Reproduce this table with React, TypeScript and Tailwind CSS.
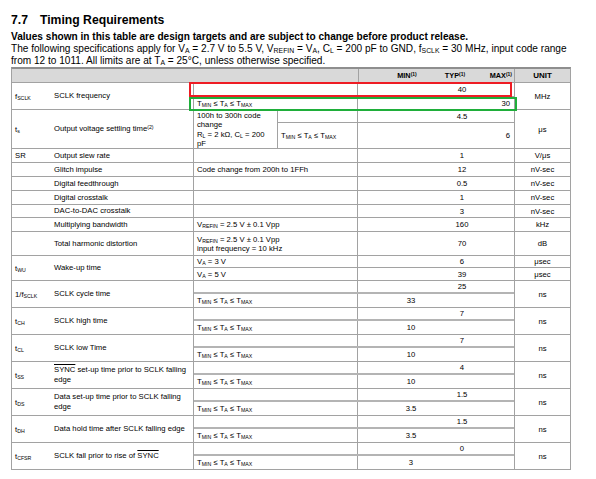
import React from "react";

type N = { children?: React.ReactNode };

function S({ children }: N) {
  return <sub className="bottom-[-0.2em] text-[0.68em]">{children}</sub>;
}
function Sup({ children }: N) {
  return <sup className="top-[-0.45em] text-[0.68em]">{children}</sup>;
}

function TT() {
  return (
    <span>
      T<S>MIN</S> ≤ T<S>A</S> ≤ T<S>MAX</S>
    </span>
  );
}

function Vals({ min, typ, max }: { min?: string; typ?: string; max?: string }) {
  return (
    <div className="grid h-full w-[156px] grid-cols-[27px_52px_50px_27px] items-center">
      <span />
      <span className="text-center">{min}</span>
      <span className="text-center">{typ}</span>
      <span className="pr-[4px] text-right">{max}</span>
    </div>
  );
}

function Cond({ children, w = "w-[164px]" }: N & { w?: string }) {
  return (
    <div className={`flex h-full items-center border-r border-[#a2a2a2] pl-[3px] ${w}`}>{children}</div>
  );
}

function Sym({ children }: N) {
  return <div className="flex w-[39px] shrink-0 items-center pl-[3px]">{children}</div>;
}
function Param({ children }: N) {
  return (
    <div className="flex w-[142px] shrink-0 items-center pl-[3px] leading-[10px]">
      <span>{children}</span>
    </div>
  );
}

function Single({
  sym,
  param,
  cond,
  typ,
  unit,
  h,
}: {
  sym?: React.ReactNode;
  param: React.ReactNode;
  cond?: React.ReactNode;
  typ: string;
  unit: string;
  h: string;
}) {
  return (
    <div className={`flex border-b border-[#a2a2a2] ${h}`}>
      <Sym>{sym}</Sym>
      <Param>{param}</Param>
      <div className="flex border-l border-[#a2a2a2]">
        <Cond>{cond}</Cond>
        <Vals typ={typ} />
      </div>
      <div className="flex flex-1 items-center justify-center border-l border-[#a2a2a2]">{unit}</div>
    </div>
  );
}

function Double({
  sym,
  param,
  typ,
  min,
}: {
  sym: React.ReactNode;
  param: React.ReactNode;
  typ: string;
  min: string;
}) {
  return (
    <div className="flex h-[27px] border-b border-[#a2a2a2]">
      <Sym>{sym}</Sym>
      <Param>{param}</Param>
      <div className="flex flex-col border-l border-[#a2a2a2]">
        <div className="flex h-[13px] border-b-2 border-[#b4b4b4]">
          <Cond />
          <Vals typ={typ} />
        </div>
        <div className="flex flex-1">
          <Cond>
            <TT />
          </Cond>
          <Vals min={min} />
        </div>
      </div>
      <div className="flex flex-1 items-center justify-center border-l border-[#a2a2a2]">ns</div>
    </div>
  );
}

export default function App() {
  return (
    <div className="min-h-[479px] w-[596px] bg-white font-['Liberation_Sans',Arial,Helvetica,sans-serif] text-black">
      <div className="pl-[11px] pt-[12px]">
        <div className="flex h-[16px] items-center text-[12.2px] font-bold leading-[16px]">
          <span className="w-[29px]">7.7</span>
          <span>Timing Requirements</span>
        </div>
        <div className="mt-[2.5px] text-[10.1px] leading-[12px]">
          <div className="font-bold">
            Values shown in this table are design targets and are subject to change before product release.
          </div>
          <div>
            The following specifications apply for V<S>A</S> = 2.7 V to 5.5 V, V<S>REFIN</S> = V<S>A</S>, C
            <S>L</S> = 200 pF to GND, f<S>SCLK</S> = 30 MHz, input code range
          </div>
          <div>
            from 12 to 1011. All limits are at T<S>A</S> = 25°C, unless otherwise specified.
          </div>
        </div>

        <div className="relative mt-[0.5px] w-[560px] border-x border-t-2 border-[#a2a2a2] border-t-[#8e8e8e] text-[7.7px] leading-[9px]">
          {/* header */}
          <div className="flex h-[14px] border-b border-[#a2a2a2] bg-[#d9d9d9] font-bold">
            <div className="w-[346px]" />
            <div className="grid h-full w-[156px] grid-cols-[27px_52px_50px_27px] items-center border-l border-[#a2a2a2] text-[7.3px]">
              <span />
              <span className="pr-[10px] text-center">
                MIN<Sup>(1)</Sup>
              </span>
              <span className="pr-[16px] text-center">
                TYP<Sup>(1)</Sup>
              </span>
              <span className="whitespace-nowrap pr-[3px] text-right">
                MAX<Sup>(1)</Sup>
              </span>
            </div>
            <div className="flex flex-1 items-center justify-center border-l border-[#a2a2a2] text-[8px]">UNIT</div>
          </div>

          {/* fSCLK */}
          <div className="flex h-[27px] border-b border-[#a2a2a2]">
            <Sym>
              <span>
                f<S>SCLK</S>
              </span>
            </Sym>
            <Param>SCLK frequency</Param>
            <div className="flex flex-col border-l border-[#a2a2a2]">
              <div className="flex h-[14px] border-b border-[#a2a2a2]">
                <Cond />
                <Vals typ="40" />
              </div>
              <div className="flex flex-1">
                <Cond>
                  <TT />
                </Cond>
                <Vals max="30" />
              </div>
            </div>
            <div className="flex flex-1 items-center justify-center border-l border-[#a2a2a2]">MHz</div>
          </div>

          {/* ts */}
          <div className="flex h-[39px] border-b border-[#a2a2a2]">
            <Sym>
              <span>
                t<S>s</S>
              </span>
            </Sym>
            <Param>
              Output voltage settling time<Sup>(2)</Sup>
            </Param>
            <div className="flex border-l border-[#a2a2a2]">
              <div className="w-[84px] border-r border-[#a2a2a2] pl-[3px] pt-[1px] leading-[9.3px]">
                100h to 300h code
                <br />
                change
                <br />R<S>L</S> = 2 kΩ, C<S>L</S> = 200
                <br />
                pF
              </div>
              <div className="flex flex-col">
                <div className="flex h-[13px] border-b border-[#a2a2a2]">
                  <Cond w="w-[80px]" />
                  <Vals typ="4.5" />
                </div>
                <div className="flex flex-1">
                  <Cond w="w-[80px]">
                    <TT />
                  </Cond>
                  <Vals max="6" />
                </div>
              </div>
            </div>
            <div className="flex flex-1 items-center justify-center border-l border-[#a2a2a2]">μs</div>
          </div>

          <Single h="h-[14px]" sym="SR" param="Output slew rate" typ="1" unit="V/μs" />
          <Single h="h-[14px]" param="Glitch impulse" cond="Code change from 200h to 1FFh" typ="12" unit="nV-sec" />
          <Single h="h-[14px]" param="Digital feedthrough" typ="0.5" unit="nV-sec" />
          <Single h="h-[14px]" param="Digital crosstalk" typ="1" unit="nV-sec" />
          <Single h="h-[13px]" param="DAC-to-DAC crosstalk" typ="3" unit="nV-sec" />
          <Single
            h="h-[14px]"
            param="Multiplying bandwidth"
            cond={
              <span>
                V<S>REFIN</S> = 2.5 V ± 0.1 Vpp
              </span>
            }
            typ="160"
            unit="kHz"
          />
          <Single
            h="h-[24px]"
            param="Total harmonic distortion"
            cond={
              <span className="leading-[9px]">
                V<S>REFIN</S> = 2.5 V ± 0.1 Vpp
                <br />
                input frequency = 10 kHz
              </span>
            }
            typ="70"
            unit="dB"
          />

          {/* tWU */}
          <div className="flex h-[25px] border-b border-[#a2a2a2]">
            <Sym>
              <span>
                t<S>WU</S>
              </span>
            </Sym>
            <Param>Wake-up time</Param>
            <div className="flex flex-1 flex-col border-l border-[#a2a2a2]">
              <div className="flex h-[12px] border-b border-[#a2a2a2]">
                <Cond>
                  <span>
                    V<S>A</S> = 3 V
                  </span>
                </Cond>
                <Vals typ="6" />
                <div className="flex flex-1 items-center justify-center border-l border-[#a2a2a2]">μsec</div>
              </div>
              <div className="flex flex-1">
                <Cond>
                  <span>
                    V<S>A</S> = 5 V
                  </span>
                </Cond>
                <Vals typ="39" />
                <div className="flex flex-1 items-center justify-center border-l border-[#a2a2a2]">μsec</div>
              </div>
            </div>
          </div>

          <Double
            sym={
              <span>
                1/f<S>SCLK</S>
              </span>
            }
            param="SCLK cycle time"
            typ="25"
            min="33"
          />
          <Double
            sym={
              <span>
                t<S>CH</S>
              </span>
            }
            param="SCLK high time"
            typ="7"
            min="10"
          />
          <Double
            sym={
              <span>
                t<S>CL</S>
              </span>
            }
            param="SCLK low Time"
            typ="7"
            min="10"
          />
          <Double
            sym={
              <span>
                t<S>SS</S>
              </span>
            }
            param={
              <>
                <span className="overline">SYNC</span> set-up time prior to SCLK falling
                <br />
                edge
              </>
            }
            typ="4"
            min="10"
          />
          <Double
            sym={
              <span>
                t<S>DS</S>
              </span>
            }
            param={
              <>
                Data set-up time prior to SCLK falling
                <br />
                edge
              </>
            }
            typ="1.5"
            min="3.5"
          />
          <Double
            sym={
              <span>
                t<S>DH</S>
              </span>
            }
            param="Data hold time after SCLK falling edge"
            typ="1.5"
            min="3.5"
          />
          <Double
            sym={
              <span>
                t<S>CFSR</S>
              </span>
            }
            param={
              <>
                SCLK fall prior to rise of <span className="overline">SYNC</span>
              </>
            }
            typ="0"
            min="3"
          />

          {/* highlight boxes */}
          <div className="absolute left-[177px] top-[13px] h-[15px] w-[323px] border-2 border-[#ee1c24]" />
          <div className="absolute left-[177px] top-[28px] h-[14px] w-[328px] border-2 border-[#1fae3a]" />
        </div>
      </div>
    </div>
  );
}
